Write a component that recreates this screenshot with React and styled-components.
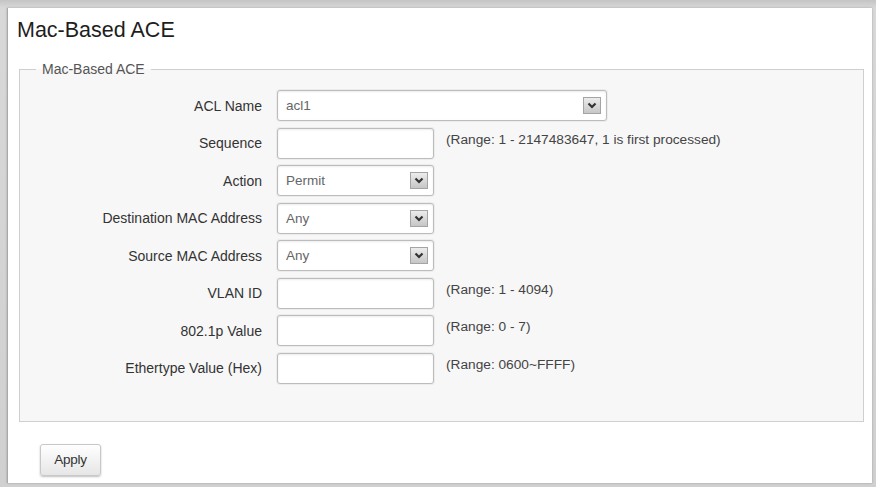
import React from 'react';
import styled, { createGlobalStyle } from 'styled-components';

const GlobalStyle = createGlobalStyle`
  html, body {
    margin: 0;
    padding: 0;
    background: #d2d2d2;
  }
  body {
    font-family: "Liberation Sans", Arial, sans-serif;
  }
`;

const Page = styled.div`
  width: 876px;
  height: 487px;
  box-sizing: border-box;
  padding: 8px 4px 4px 7px;
  background: linear-gradient(#c4c4c4, #d8d8d8 8px, #d0d0d0);
`;

const Panel = styled.div`
  height: 100%;
  box-sizing: border-box;
  background: #fff;
  border-left: 1px solid #a9a9a9;
  box-shadow: 0 0 2px rgba(0, 0, 0, 0.25);
  padding: 10px 8px 0 9px;
`;

const Title = styled.h1`
  margin: 0 0 18px;
  font-size: 21.5px;
  line-height: 25px;
  font-weight: normal;
  color: #1e1e1e;
`;

const Box = styled.fieldset`
  margin: 0 0 0 2px;
  padding: 13px 0 37px;
  border: 1px solid #cfcfcf;
  background: #f7f7f7;
  min-width: 0;
`;

const Legend = styled.legend`
  margin-left: 16px;
  padding: 0 6px;
  font-size: 14px;
  line-height: 16px;
  color: #555;
`;

const Form = styled.div`
  display: grid;
  grid-template-columns: 242px auto 1fr;
  column-gap: 15px;
  row-gap: 6.5px;
  align-items: center;
`;

const Label = styled.div`
  text-align: right;
  font-size: 14px;
  color: #333;
  white-space: nowrap;
`;

const Field = styled.div`
  position: relative;
  width: ${p => p.$width}px;
  height: 31px;
  box-sizing: border-box;
  border: 1px solid #bcbcbc;
  border-radius: 3px;
  background: #fff;
  box-shadow: inset 0 1px 2px rgba(0, 0, 0, 0.08), 0 0 0 1px #ececec;
  grid-column: ${p => (p.$span ? '2 / span 2' : 'auto')};
`;

const TextInput = styled.input`
  width: 100%;
  height: 100%;
  box-sizing: border-box;
  border: none;
  background: transparent;
  padding: 0 8px;
  font: inherit;
  font-size: 13.5px;
  color: #555;
  outline: none;
`;

const SelectText = styled.div`
  height: 100%;
  display: flex;
  align-items: center;
  padding: 0 8px;
  font-size: 13.5px;
  color: #666;
`;

const Arrow = styled.span`
  position: absolute;
  right: 5px;
  top: 6px;
  width: 18px;
  height: 17px;
  box-sizing: border-box;
  border: 1px solid #a4a4a4;
  background: linear-gradient(#ececec, #c6c6c6);
  display: flex;
  align-items: center;
  justify-content: center;
`;

const Hint = styled.div`
  align-self: start;
  margin-left: -3px;
  padding-top: 4px;
  font-size: 13.7px;
  color: #444;
  white-space: nowrap;
`;

const Footer = styled.div`
  padding: 22px 0 0 23px;
`;

const Button = styled.button`
  width: 61px;
  height: 32px;
  border: 1px solid #c8c8c8;
  border-radius: 3px;
  background: linear-gradient(#ffffff, #e6e6e6);
  box-shadow: 0 1px 2px rgba(0, 0, 0, 0.25);
  font-family: inherit;
  font-size: 13.5px;
  color: #333;
  letter-spacing: -0.3px;
  padding: 0;
`;

const Chevron = () => (
  <svg width="10" height="7" viewBox="0 0 10 7">
    <path d="M1.5 1.5 L5 5 L8.5 1.5" fill="none" stroke="#333" strokeWidth="2.2" />
  </svg>
);

const Select = ({ value, width, span }) => (
  <Field $width={width} $span={span}>
    <SelectText>{value}</SelectText>
    <Arrow><Chevron /></Arrow>
  </Field>
);

const Input = () => (
  <Field $width={157}>
    <TextInput />
  </Field>
);

const rows = [
  { label: 'ACL Name', select: 'acl1', width: 330, span: true },
  { label: 'Sequence', hint: '(Range: 1 - 2147483647, 1 is first processed)' },
  { label: 'Action', select: 'Permit', width: 157 },
  { label: 'Destination MAC Address', select: 'Any', width: 157 },
  { label: 'Source MAC Address', select: 'Any', width: 157 },
  { label: 'VLAN ID', hint: '(Range: 1 - 4094)' },
  { label: '802.1p Value', hint: '(Range: 0 - 7)' },
  { label: 'Ethertype Value (Hex)', hint: '(Range: 0600~FFFF)' },
];

export default function App() {
  return (
    <>
      <GlobalStyle />
      <Page>
        <Panel>
          <Title>Mac-Based ACE</Title>
          <Box>
            <Legend>Mac-Based ACE</Legend>
            <Form>
              {rows.map(r => (
                <React.Fragment key={r.label}>
                  <Label>{r.label}</Label>
                  {r.select ? (
                    <Select value={r.select} width={r.width} span={r.span} />
                  ) : (
                    <Input />
                  )}
                  {!r.span && <Hint>{r.hint}</Hint>}
                </React.Fragment>
              ))}
            </Form>
          </Box>
          <Footer>
            <Button>Apply</Button>
          </Footer>
        </Panel>
      </Page>
    </>
  );
}
